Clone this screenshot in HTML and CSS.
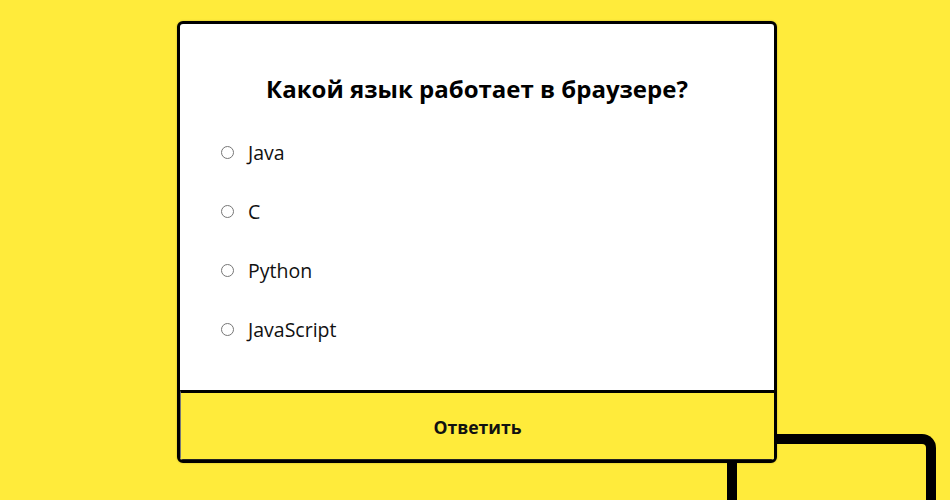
FILE: index.html
```html
<!DOCTYPE html>
<html lang="ru">
<head>
<meta charset="utf-8">
<title>Квиз</title>
<link rel="stylesheet" href="styles.css">
</head>
<body>
<div class="deco"></div>
<main class="card">
  <h2 class="question">Какой язык работает в браузере?</h2>
  <ul class="answers">
    <li class="answer"><input type="radio" name="a" id="a1"><label for="a1">Java</label></li>
    <li class="answer"><input type="radio" name="a" id="a2"><label for="a2">C</label></li>
    <li class="answer"><input type="radio" name="a" id="a3"><label for="a3">Python</label></li>
    <li class="answer"><input type="radio" name="a" id="a4"><label for="a4">JavaScript</label></li>
  </ul>
  <button class="submit" type="button">Ответить</button>
</main>
</body>
</html>
```
FILE: styles.css
```css
html, body {
  margin: 0;
  height: 100%;
  overflow: hidden;
}
body {
  background: #ffeb3b;
  font-family: "Open Sans", "Noto Sans", sans-serif;
  display: flex;
  justify-content: center;
  align-items: flex-start;
  padding-left: 4px;
  box-sizing: border-box;
  position: relative;
}
.deco {
  position: absolute;
  left: 727px;
  top: 434px;
  width: 209px;
  height: 66px;
  box-sizing: border-box;
  border: 10px solid #000;
  border-bottom: none;
  border-radius: 14px 14px 0 0;
  z-index: 0;
}
.card {
  position: relative;
  z-index: 1;
  width: 600px;
  margin-top: 21px;
  box-sizing: border-box;
  background: #fff;
  border: 3px solid #000;
  border-radius: 6px;
  overflow: hidden;
  display: flex;
  flex-direction: column;
  box-shadow: 0 0 2px rgba(0,0,0,0.25);
}
.question {
  margin: 0;
  padding-top: 50px;
  font-size: 24px;
  line-height: 30px;
  font-weight: 700;
  text-align: center;
  color: #000;
}
.answers {
  list-style: none;
  margin: 36px 0 0;
  padding: 0 0 0 41px;
}
.answer {
  display: flex;
  align-items: center;
  height: 25px;
  margin-bottom: 34px;
  font-size: 19.5px;
  color: #111;
}
.answer:last-child {
  margin-bottom: 0;
}
.answer input {
  margin: 0 14px 0 0;
  width: 13px;
  height: 13px;
}
.submit {
  margin-top: 48px;
  height: 70px;
  background: #ffeb3b;
  border: none;
  border-top: 3px solid #000;
  border-left: 1px solid #777;
  border-bottom: 1px solid #222;
  font-family: "Open Sans", "Noto Sans", sans-serif;
  font-size: 17.6px;
  font-weight: 700;
  color: #111;
  padding: 2px 0 0;
}
```
